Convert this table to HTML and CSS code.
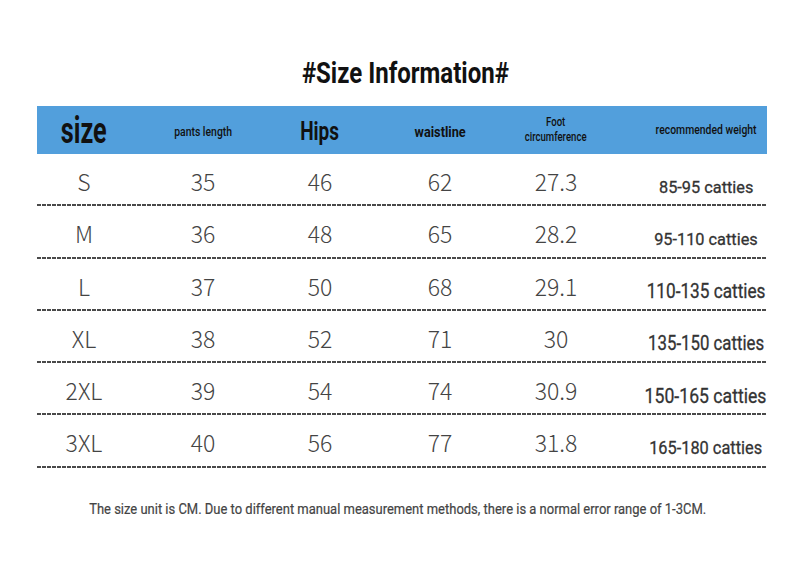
FILE: index.html
```html
<!DOCTYPE html>
<html>
<head>
<meta charset="utf-8">
<link rel="stylesheet" href="styles.css">
</head>
<body>
<div class="page">
  <h1 class="title"><span class="sq sq-title">#Size Information#</span></h1>
  <div class="table">
    <div class="row thead">
      <div class="cell"><span class="sq h-size">size</span></div>
      <div class="cell"><span class="sq h-small">pants length</span></div>
      <div class="cell"><span class="sq h-hips">Hips</span></div>
      <div class="cell"><span class="sq h-waist">waistline</span></div>
      <div class="cell"><span class="sq h-foot">Foot<br>circumference</span></div>
      <div class="cell wcell"><span class="sq h-small">recommended weight</span></div>
    </div>
    <div class="row">
      <div class="cell num">S</div><div class="cell num">35</div><div class="cell num">46</div><div class="cell num">62</div><div class="cell num">27.3</div>
      <div class="cell wcell"><span class="sq w w1">85-95 catties</span></div>
    </div>
    <div class="row">
      <div class="cell num">M</div><div class="cell num">36</div><div class="cell num">48</div><div class="cell num">65</div><div class="cell num">28.2</div>
      <div class="cell wcell"><span class="sq w w2">95-110 catties</span></div>
    </div>
    <div class="row">
      <div class="cell num">L</div><div class="cell num">37</div><div class="cell num">50</div><div class="cell num">68</div><div class="cell num">29.1</div>
      <div class="cell wcell"><span class="sq w w3">110-135 catties</span></div>
    </div>
    <div class="row">
      <div class="cell num">XL</div><div class="cell num">38</div><div class="cell num">52</div><div class="cell num">71</div><div class="cell num">30</div>
      <div class="cell wcell"><span class="sq w w4">135-150 catties</span></div>
    </div>
    <div class="row">
      <div class="cell num">2XL</div><div class="cell num">39</div><div class="cell num">54</div><div class="cell num">74</div><div class="cell num">30.9</div>
      <div class="cell wcell"><span class="sq w w5">150-165 catties</span></div>
    </div>
    <div class="row">
      <div class="cell num">3XL</div><div class="cell num">40</div><div class="cell num">56</div><div class="cell num">77</div><div class="cell num">31.8</div>
      <div class="cell wcell"><span class="sq w w6">165-180 catties</span></div>
    </div>
  </div>
  <p class="note"><span class="sq sq-note">The size unit is CM. Due to different manual measurement methods, there is a normal error range of 1-3CM.</span></p>
</div>
</body>
</html>
```

FILE: styles.css
```css
* { box-sizing: border-box; }
html, body { margin: 0; padding: 0; background: #fff; }
body { font-family: Roboto, "Liberation Sans", sans-serif; color: #222; }

.page { width: 811px; height: 568px; padding-top: 55px; }

.sq { display: inline-block; white-space: nowrap; }

.title {
  margin: 0;
  text-align: center;
  font-size: 30px;
  line-height: 35px;
  font-weight: 700;
  color: #111;
}
.sq-title { transform: scaleX(0.8); }

.table { margin: 16px 0 0 37px; width: 730px; }

.row {
  display: grid;
  grid-template-columns: 94px 144px 90px 150px 82px 170px;
  align-items: center;
  height: 52.25px;
  padding-bottom: 2px;
  background-image: repeating-linear-gradient(90deg, #4a4a4a 0 4px, transparent 4px 5px);
  background-size: 100% 2px;
  background-position: left bottom;
  background-repeat: no-repeat;
}
.row.thead {
  height: 48px;
  padding-bottom: 0;
  background: #529fdc;
  color: #111;
}

.cell { text-align: center; }
.wcell { display: flex; justify-content: center; padding-left: 48px; }

.num {
  font-family: "Noto Sans CJK SC", "Noto Sans", sans-serif;
  font-weight: 300;
  font-size: 23px;
  color: #444;
  padding-top: 4px;
}

.h-size { font-size: 36px; font-weight: 700; transform: scaleX(0.7); padding-top: 2px; }
.h-small { font-size: 13px; font-weight: 500; transform: scaleX(0.8); line-height: 16px; }
.h-hips { font-size: 25px; font-weight: 700; transform: scaleX(0.76); padding-top: 2px; }
.h-waist { font-size: 15px; font-weight: 700; transform: scaleX(0.85); padding-top: 3px; }
.h-foot { font-size: 12px; font-weight: 500; transform: scaleX(0.8); line-height: 15px; }

.w { font-weight: 400; color: #333; padding-top: 15px; -webkit-text-stroke: 0.3px #333; }
.w1 { font-size: 17px; transform: scaleX(0.96); }
.w2 { font-size: 17px; transform: scaleX(0.96); }
.w3 { font-size: 20px; transform: scaleX(0.86); }
.w4 { font-size: 20px; transform: scaleX(0.84); }
.w5 { font-size: 21px; transform: scaleX(0.84); }
.w6 { font-size: 19px; transform: scaleX(0.86); }

.note {
  margin: 32px 0 0 0;
  padding-right: 16px;
  text-align: center;
  font-size: 15px;
  color: #444;
  -webkit-text-stroke: 0.2px #444;
}
.sq-note { transform: scaleX(0.865); }
```
